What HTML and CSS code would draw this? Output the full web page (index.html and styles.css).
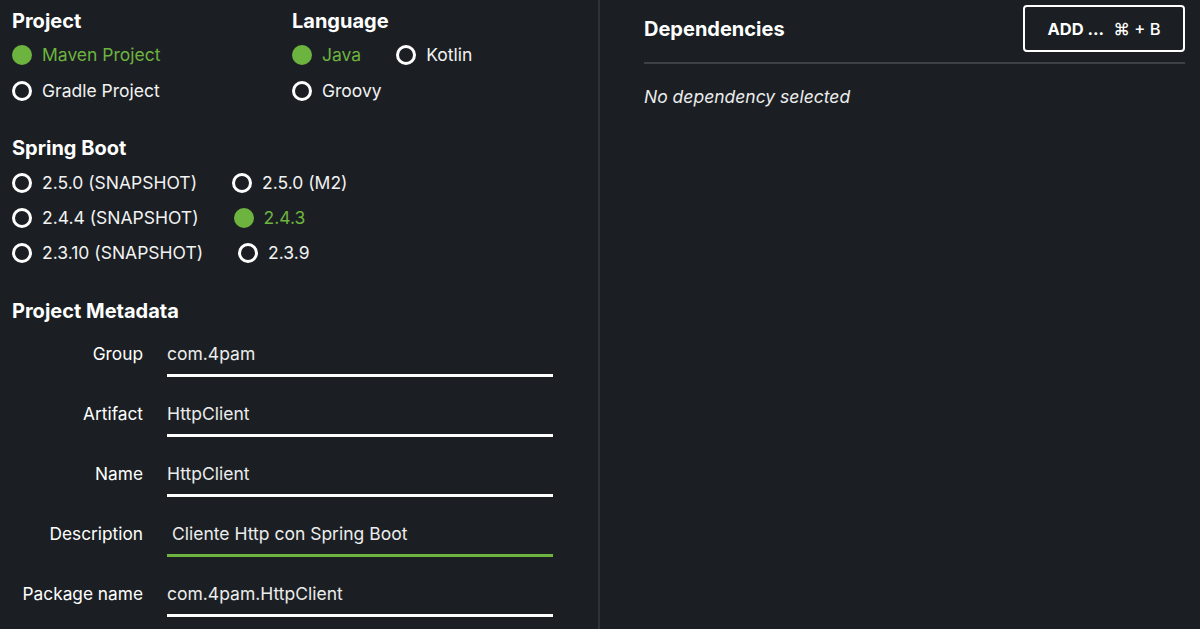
FILE: index.html
```html
<!DOCTYPE html>
<html lang="en">
<head>
<meta charset="utf-8">
<title>Spring Initializr</title>
<link rel="stylesheet" href="styles.css">
</head>
<body>
<div class="page">
  <div class="left">
    <div class="top-row">
      <section class="group group-project">
        <h2 class="title">Project</h2>
        <div class="radios">
          <label class="radio checked"><span class="dot"></span>Maven Project</label>
        </div>
        <div class="radios">
          <label class="radio"><span class="dot"></span>Gradle Project</label>
        </div>
      </section>
      <section class="group group-language">
        <h2 class="title">Language</h2>
        <div class="radios">
          <label class="radio checked"><span class="dot"></span>Java</label>
          <label class="radio"><span class="dot"></span>Kotlin</label>
        </div>
        <div class="radios">
          <label class="radio"><span class="dot"></span>Groovy</label>
        </div>
      </section>
    </div>

    <section class="group group-boot">
      <h2 class="title">Spring Boot</h2>
      <div class="radios tight">
        <label class="radio"><span class="dot"></span>2.5.0 (SNAPSHOT)</label>
        <label class="radio"><span class="dot"></span>2.5.0 (M2)</label>
      </div>
      <div class="radios tight">
        <label class="radio"><span class="dot"></span>2.4.4 (SNAPSHOT)</label>
        <label class="radio checked"><span class="dot"></span>2.4.3</label>
      </div>
      <div class="radios tight">
        <label class="radio"><span class="dot"></span>2.3.10 (SNAPSHOT)</label>
        <label class="radio"><span class="dot"></span>2.3.9</label>
      </div>
    </section>

    <section class="group group-meta">
      <h2 class="title">Project Metadata</h2>
      <div class="field">
        <span class="label">Group</span>
        <span class="input">com.4pam</span>
      </div>
      <div class="field">
        <span class="label">Artifact</span>
        <span class="input">HttpClient</span>
      </div>
      <div class="field">
        <span class="label">Name</span>
        <span class="input">HttpClient</span>
      </div>
      <div class="field">
        <span class="label">Description</span>
        <span class="input focused">Cliente Http con Spring Boot</span>
      </div>
      <div class="field">
        <span class="label">Package name</span>
        <span class="input">com.4pam.HttpClient</span>
      </div>
    </section>
  </div>

  <div class="right">
    <div class="dep-head">
      <h2 class="title">Dependencies</h2>
      <button class="add-btn">ADD ... <span class="kbd">⌘ + B</span></button>
    </div>
    <p class="empty">No dependency selected</p>
  </div>
</div>
</body>
</html>
```

FILE: styles.css
```css
* { box-sizing: border-box; }

html, body {
  margin: 0;
  padding: 0;
  background: #1b1f23;
  color: #ffffff;
  font-family: "Inter", "Roboto", sans-serif;
}

.page {
  display: flex;
  height: 629px;
  overflow: hidden;
}

.left {
  width: 600px;
  border-right: 2px solid #2e3337;
  padding: 9px 12px 0 12px;
}

.right {
  flex: 1;
  padding: 5px 15px 0 44px;
}

.title {
  margin: 0;
  font-size: 20px;
  font-weight: 700;
  line-height: 24px;
  color: #fff;
}

.top-row {
  display: flex;
}

.group-project {
  width: 280px;
}

.radios {
  display: flex;
  align-items: center;
  height: 36px;
}

.radios.tight {
  height: 35px;
}

.group-project .title,
.group-language .title {
  margin-bottom: 4px;
}

.group-boot {
  margin-top: 27px;
}

.group-boot .title {
  margin-bottom: 5px;
}

.radio {
  display: flex;
  align-items: center;
  font-size: 17.5px;
  line-height: 20px;
  color: #f2f2f2;
  margin-right: 35px;
  white-space: nowrap;
}

.dot {
  width: 20px;
  height: 20px;
  border-radius: 50%;
  border: 3px solid #ffffff;
  margin-right: 10px;
  flex: none;
}

.radio.checked {
  color: #6db33f;
}

.radio.checked .dot {
  background: #6db33f;
  border-color: #6db33f;
}

.group-meta {
  margin-top: 29px;
}

.group-meta .title {
  margin-bottom: 7px;
}

.field {
  display: flex;
  align-items: flex-start;
  margin-bottom: 13px;
}

.label {
  width: 131px;
  text-align: right;
  padding-top: 12px;
  font-size: 17.3px;
  line-height: 24px;
  margin-right: 24px;
  color: #fff;
}

.input {
  width: 386px;
  padding: 12px 0 8px 0;
  font-size: 17.5px;
  line-height: 24px;
  color: #ececec;
  border-bottom: 3px solid #ffffff;
}

.input.focused {
  padding-left: 5px;
  border-bottom-color: #6db33f;
}

.dep-head {
  display: flex;
  align-items: center;
  justify-content: space-between;
  border-bottom: 2px solid #3d4246;
  padding-bottom: 10px;
}

.add-btn {
  width: 162px;
  height: 47px;
  background: transparent;
  border: 2px solid #ffffff;
  border-radius: 4px;
  color: #fff;
  font-family: inherit;
  font-size: 16.5px;
  font-weight: 700;
  padding: 0;
  cursor: pointer;
}

.add-btn .kbd {
  font-weight: 500;
  margin-left: 6px;
}

.empty {
  margin: 21px 0 0 0;
  font-size: 17.5px;
  line-height: 24px;
  font-style: italic;
  color: #ececec;
}
```
